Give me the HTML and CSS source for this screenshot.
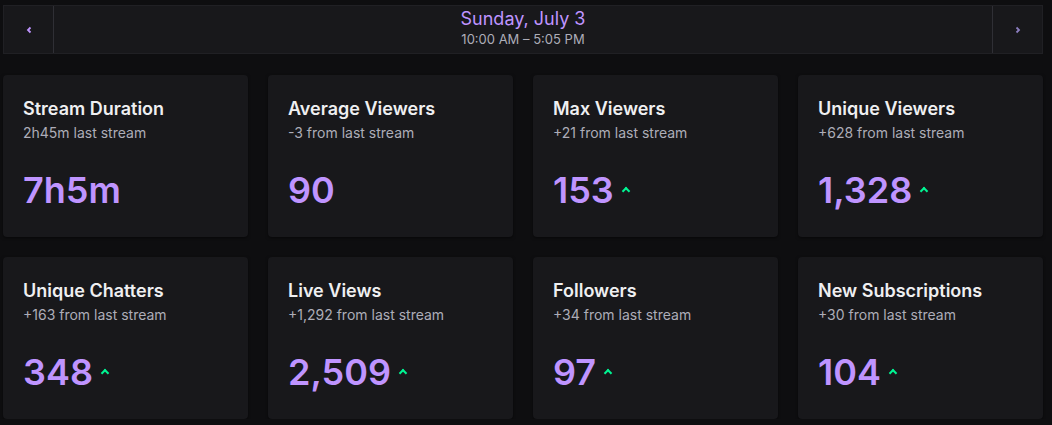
FILE: index.html
```html
<!DOCTYPE html>
<html lang="en">
<head>
  <meta charset="UTF-8" />
  <title>Stream Summary</title>
  <link rel="stylesheet" href="styles.css">
</head>
<body>

<div class="page">
  <div class="datebar">
    <button class="nav-btn prev">
      <svg width="8" height="8" viewBox="0 0 8 8"><path d="M5.5 1.5 L3 4 L5.5 6.5" fill="none" stroke="#bf94ff" stroke-width="1.8"/></svg>
    </button>
    <div class="date">
      <div class="day">Sunday, July 3</div>
      <div class="time">10:00 AM – 5:05 PM</div>
    </div>
    <button class="nav-btn next">
      <svg width="8" height="8" viewBox="0 0 8 8"><path d="M2.5 1.5 L5 4 L2.5 6.5" fill="none" stroke="#8c7fc0" stroke-width="1.8"/></svg>
    </button>
  </div>

  <div class="stats">
    <div class="card">
      <div class="title">Stream Duration</div>
      <div class="sub">2h45m last stream</div>
      <div class="value">7h5m</div>
    </div>
    <div class="card">
      <div class="title">Average Viewers</div>
      <div class="sub">-3 from last stream</div>
      <div class="value">90</div>
    </div>
    <div class="card">
      <div class="title">Max Viewers</div>
      <div class="sub">+21 from last stream</div>
      <div class="value">153 <span class="up"></span></div>
    </div>
    <div class="card">
      <div class="title">Unique Viewers</div>
      <div class="sub">+628 from last stream</div>
      <div class="value">1,328 <span class="up"></span></div>
    </div>
    <div class="card">
      <div class="title">Unique Chatters</div>
      <div class="sub">+163 from last stream</div>
      <div class="value">348 <span class="up"></span></div>
    </div>
    <div class="card">
      <div class="title">Live Views</div>
      <div class="sub">+1,292 from last stream</div>
      <div class="value">2,509 <span class="up"></span></div>
    </div>
    <div class="card">
      <div class="title">Followers</div>
      <div class="sub">+34 from last stream</div>
      <div class="value">97 <span class="up"></span></div>
    </div>
    <div class="card">
      <div class="title">New Subscriptions</div>
      <div class="sub">+30 from last stream</div>
      <div class="value">104 <span class="up"></span></div>
    </div>
  </div>
</div>

</body>
</html>
```

FILE: styles.css
```css
body {
  margin: 0;
  background-color: #0e0e10;
  font-family: Inter, "Noto Sans", sans-serif;
  color: #efeff1;
}

.page {
  width: 1040px;
  padding: 5px 0 0 3px;
}

.datebar {
  display: flex;
  height: 49px;
  background-color: #18181b;
  border: 1px solid #202024;
  box-sizing: border-box;
  margin-bottom: 21px;
}

.nav-btn {
  width: 50px;
  background: none;
  border: none;
  padding: 0;
  display: flex;
  align-items: center;
  justify-content: center;
}

.prev {
  border-right: 1px solid #2f2f35;
}

.next {
  border-left: 1px solid #2f2f35;
}

.date {
  flex: 1;
  text-align: center;
  padding-top: 2px;
}

.day {
  color: #bf94ff;
  font-size: 18px;
  line-height: 22px;
}

.time {
  color: #adadb8;
  font-size: 13px;
  line-height: 18px;
}

.stats {
  display: grid;
  grid-template-columns: repeat(4, 245px);
  gap: 20px;
}

.card {
  background-color: #18181b;
  border-radius: 4px;
  height: 162px;
  box-sizing: border-box;
  padding: 23px 20px 0;
  box-shadow: 0 1px 3px rgba(0, 0, 0, 0.5);
}

.title {
  font-size: 18px;
  font-weight: 600;
  line-height: 22px;
}

.sub {
  color: #adadb8;
  font-size: 14px;
  line-height: 20px;
  margin-top: 3px;
}

.value {
  color: #bf94ff;
  font-size: 36px;
  font-weight: 600;
  line-height: 44px;
  margin-top: 25px;
  display: flex;
  align-items: center;
}

.up {
  display: inline-block;
  width: 4px;
  height: 4px;
  border-top: 2px solid #00f593;
  border-left: 2px solid #00f593;
  transform: rotate(45deg);
  margin-left: 9px;
  margin-top: 2px;
}
```
